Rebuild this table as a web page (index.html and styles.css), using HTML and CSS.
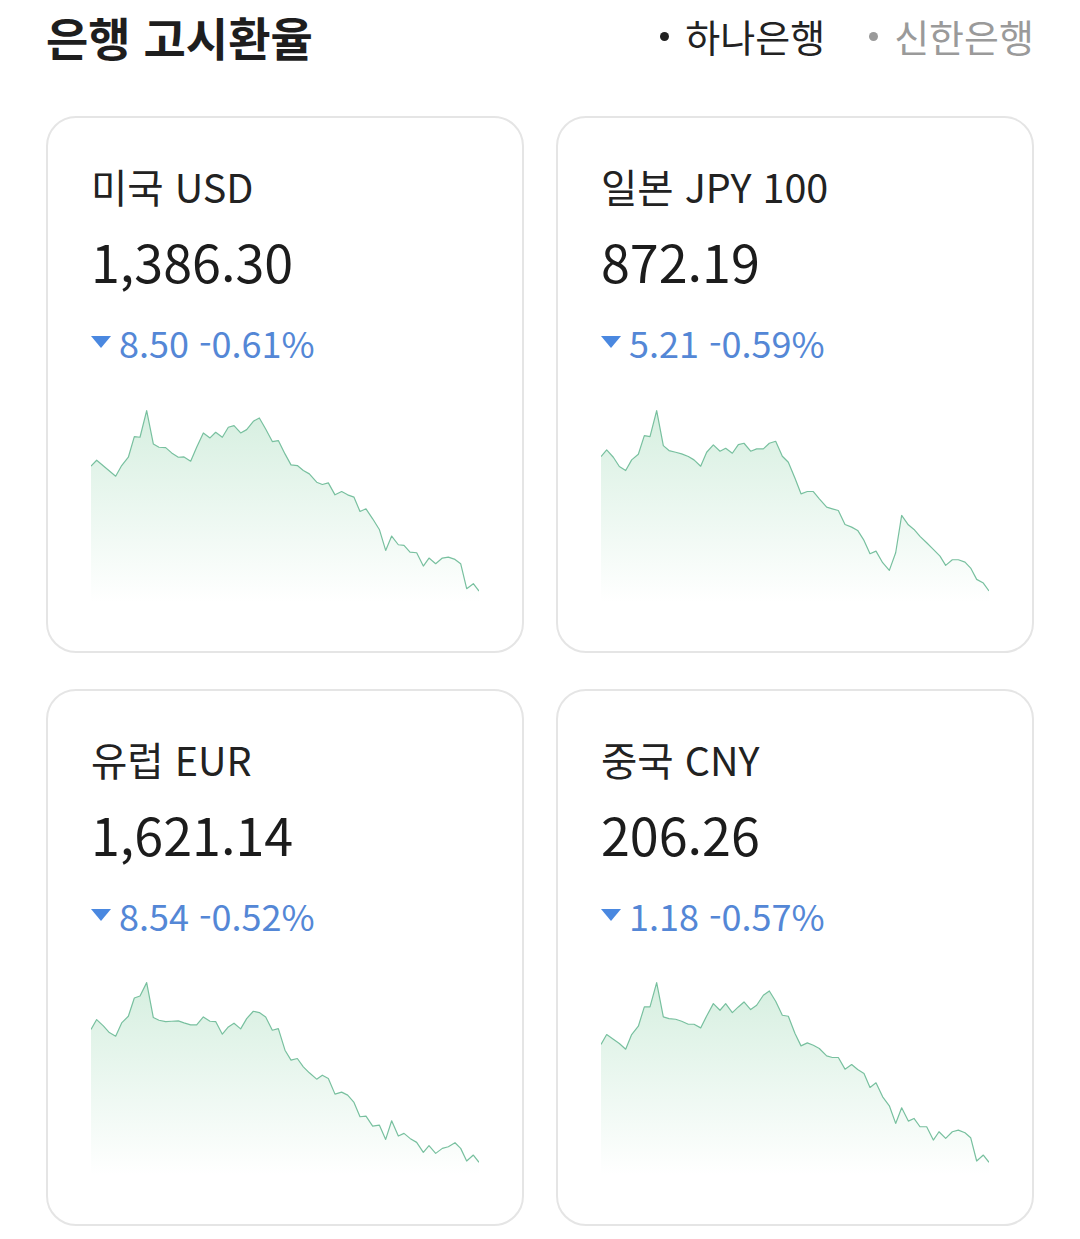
FILE: index.html
```html
<!DOCTYPE html>
<html lang="ko">
<head>
<meta charset="utf-8">
<title>은행 고시환율</title>
<link rel="stylesheet" href="styles.css">
</head>
<body>
<header class="header">
  <h1 class="title">은행 고시환율</h1>
  <nav class="tabs">
    <span class="tab tab-active"><i class="dot"></i>하나은행</span>
    <span class="tab"><i class="dot"></i>신한은행</span>
  </nav>
</header>
<main class="grid">
  <section class="card">
    <div class="label">미국 USD</div>
    <div class="value">1,386.30</div>
    <div class="change"><svg class="tri" viewBox="0 0 20 12"><polygon points="0,0 20,0 10,12"/></svg>8.50 -0.61%</div>
    <svg class="chart" viewBox="33 0 1164 640" preserveAspectRatio="none">
      <defs><linearGradient id="g1" x1="0" y1="0" x2="0" y2="1"><stop offset="0" stop-color="#d6efe0"/><stop offset="1" stop-color="#ffffff"/></linearGradient></defs>
      <path class="area" fill="url(#g1)" d="M33,640 L33,232 50,214 107,262 125,230 145,205 163,143 180,145 200,65 220,165 237,175 257,176 275,192 295,205 312,204 332,217 350,175 370,132 390,147 407,130 427,145 445,115 462,110 482,132 500,122 520,97 538,87 557,120 577,158 595,155 615,195 633,228 652,230 670,245 688,255 710,280 727,287 745,282 765,318 785,308 803,318 822,325 840,368 858,360 878,390 898,422 917,485 935,442 955,468 972,470 990,490 1010,492 1030,532 1047,508 1067,525 1087,508 1105,505 1125,512 1142,525 1160,600 1180,585 1197,607 L1197,640 Z"/>
      <polyline class="line" points="33,232 50,214 107,262 125,230 145,205 163,143 180,145 200,65 220,165 237,175 257,176 275,192 295,205 312,204 332,217 350,175 370,132 390,147 407,130 427,145 445,115 462,110 482,132 500,122 520,97 538,87 557,120 577,158 595,155 615,195 633,228 652,230 670,245 688,255 710,280 727,287 745,282 765,318 785,308 803,318 822,325 840,368 858,360 878,390 898,422 917,485 935,442 955,468 972,470 990,490 1010,492 1030,532 1047,508 1067,525 1087,508 1105,505 1125,512 1142,525 1160,600 1180,585 1197,607"/>
    </svg>
  </section>
  <section class="card">
    <div class="label">일본 JPY 100</div>
    <div class="value">872.19</div>
    <div class="change"><svg class="tri" viewBox="0 0 20 12"><polygon points="0,0 20,0 10,12"/></svg>5.21 -0.59%</div>
    <svg class="chart" viewBox="33 0 1164 640" preserveAspectRatio="none">
      <defs><linearGradient id="g2" x1="0" y1="0" x2="0" y2="1"><stop offset="0" stop-color="#d6efe0"/><stop offset="1" stop-color="#ffffff"/></linearGradient></defs>
      <path class="area" fill="url(#g2)" d="M33,640 L33,203 50,183 70,205 88,233 107,245 125,213 145,196 163,140 180,143 200,65 220,170 237,185 257,190 275,195 295,203 312,213 332,232 350,190 370,168 390,187 407,178 427,193 445,167 462,163 482,187 500,180 520,180 538,163 557,157 577,202 595,220 615,268 633,315 652,308 670,308 688,330 710,355 727,360 745,365 765,407 785,415 803,425 822,455 840,495 858,487 878,522 898,545 917,492 935,380 955,408 972,422 990,443 1010,462 1030,482 1050,502 1067,530 1087,513 1105,513 1125,520 1142,538 1160,572 1180,583 1197,607 L1197,640 Z"/>
      <polyline class="line" points="33,203 50,183 70,205 88,233 107,245 125,213 145,196 163,140 180,143 200,65 220,170 237,185 257,190 275,195 295,203 312,213 332,232 350,190 370,168 390,187 407,178 427,193 445,167 462,163 482,187 500,180 520,180 538,163 557,157 577,202 595,220 615,268 633,315 652,308 670,308 688,330 710,355 727,360 745,365 765,407 785,415 803,425 822,455 840,495 858,487 878,522 898,545 917,492 935,380 955,408 972,422 990,443 1010,462 1030,482 1050,502 1067,530 1087,513 1105,513 1125,520 1142,538 1160,572 1180,583 1197,607"/>
    </svg>
  </section>
  <section class="card">
    <div class="label">유럽 EUR</div>
    <div class="value">1,621.14</div>
    <div class="change"><svg class="tri" viewBox="0 0 20 12"><polygon points="0,0 20,0 10,12"/></svg>8.54 -0.52%</div>
    <svg class="chart" viewBox="33 0 1164 640" preserveAspectRatio="none">
      <defs><linearGradient id="g3" x1="0" y1="0" x2="0" y2="1"><stop offset="0" stop-color="#d6efe0"/><stop offset="1" stop-color="#ffffff"/></linearGradient></defs>
      <path class="area" fill="url(#g3)" d="M33,640 L33,203 50,173 70,192 88,212 107,223 125,183 145,163 163,108 180,102 200,62 220,167 237,175 257,179 275,178 295,177 312,183 332,189 350,189 370,165 390,178 407,179 427,217 445,195 462,184 482,201 500,170 520,148 538,152 557,165 577,205 595,200 615,265 633,295 652,290 670,315 688,333 710,352 727,340 745,350 765,397 785,391 803,400 822,422 840,465 858,463 878,493 898,490 917,533 935,477 955,523 972,515 990,530 1010,542 1030,572 1047,552 1067,575 1087,560 1105,555 1125,543 1142,560 1160,598 1180,580 1197,602 L1197,640 Z"/>
      <polyline class="line" points="33,203 50,173 70,192 88,212 107,223 125,183 145,163 163,108 180,102 200,62 220,167 237,175 257,179 275,178 295,177 312,183 332,189 350,189 370,165 390,178 407,179 427,217 445,195 462,184 482,201 500,170 520,148 538,152 557,165 577,205 595,200 615,265 633,295 652,290 670,315 688,333 710,352 727,340 745,350 765,397 785,391 803,400 822,422 840,465 858,463 878,493 898,490 917,533 935,477 955,523 972,515 990,530 1010,542 1030,572 1047,552 1067,575 1087,560 1105,555 1125,543 1142,560 1160,598 1180,580 1197,602"/>
    </svg>
  </section>
  <section class="card">
    <div class="label">중국 CNY</div>
    <div class="value">206.26</div>
    <div class="change"><svg class="tri" viewBox="0 0 20 12"><polygon points="0,0 20,0 10,12"/></svg>1.18 -0.57%</div>
    <svg class="chart" viewBox="33 0 1164 640" preserveAspectRatio="none">
      <defs><linearGradient id="g4" x1="0" y1="0" x2="0" y2="1"><stop offset="0" stop-color="#d6efe0"/><stop offset="1" stop-color="#ffffff"/></linearGradient></defs>
      <path class="area" fill="url(#g4)" d="M33,640 L33,248 50,218 70,232 88,245 107,262 125,218 145,193 163,135 180,135 200,62 220,165 237,170 257,172 275,178 295,187 312,187 332,198 350,162 370,125 390,145 407,125 427,152 445,135 462,120 482,143 500,130 520,100 538,87 557,118 577,160 595,163 615,215 633,252 652,243 670,250 688,260 710,282 727,287 745,287 765,322 785,308 803,323 822,335 840,377 858,363 878,405 898,432 917,485 935,438 955,478 972,470 990,495 1010,495 1030,535 1047,510 1067,530 1087,510 1105,505 1125,513 1142,528 1160,598 1180,580 1197,602 L1197,640 Z"/>
      <polyline class="line" points="33,248 50,218 70,232 88,245 107,262 125,218 145,193 163,135 180,135 200,62 220,165 237,170 257,172 275,178 295,187 312,187 332,198 350,162 370,125 390,145 407,125 427,152 445,135 462,120 482,143 500,130 520,100 538,87 557,118 577,160 595,163 615,215 633,252 652,243 670,250 688,260 710,282 727,287 745,287 765,322 785,308 803,323 822,335 840,377 858,363 878,405 898,432 917,485 935,438 955,478 972,470 990,495 1010,495 1030,535 1047,510 1067,530 1087,510 1105,505 1125,513 1142,528 1160,598 1180,580 1197,602"/>
    </svg>
  </section>
</main>
</body>
</html>
```

FILE: styles.css
```css
* { box-sizing: border-box; }
html, body {
  margin: 0;
  padding: 0;
  background: #ffffff;
}
body {
  font-family: "Noto Sans CJK KR", "Noto Sans", sans-serif;
  color: #222222;
}
.header {
  display: flex;
  align-items: center;
  justify-content: space-between;
  padding: 5px 46px 0 46px;
  height: 67px;
}
.title {
  margin: 0;
  font-size: 46px;
  font-weight: 700;
  line-height: 60px;
  color: #1e1e1e;
}
.tabs {
  display: flex;
  align-items: center;
  gap: 44px;
}
.tab {
  display: flex;
  align-items: center;
  gap: 16px;
  font-size: 38px;
  line-height: 60px;
  color: #9a9a9a;
}
.tab-active {
  color: #222222;
}
.dot {
  display: block;
  width: 9px;
  height: 9px;
  border-radius: 50%;
  background: currentColor;
}
.grid {
  display: grid;
  grid-template-columns: 1fr 1fr;
  column-gap: 32px;
  row-gap: 36px;
  padding: 49px 46px 0 46px;
}
.card {
  display: flex;
  flex-direction: column;
  border: 2px solid #e5e5e5;
  border-radius: 30px;
  padding: 43px 43px 46px 43px;
  height: 537px;
}
.label {
  font-size: 39.5px;
  line-height: 50px;
  color: #222222;
}
.value {
  margin-top: 15px;
  font-size: 52px;
  line-height: 70px;
  color: #1c1c1c;
}
.change {
  margin-top: 21px;
  display: flex;
  align-items: center;
  gap: 8px;
  font-size: 36px;
  line-height: 50px;
  color: #5487d6;
}
.tri {
  width: 20px;
  height: 12px;
  fill: #4a88e0;
}
.chart {
  margin-top: 22px;
  width: 388px;
  height: 213px;
  display: block;
}
.area {
  stroke: none;
}
.line {
  fill: none;
  stroke: #78c09f;
  stroke-width: 1.2;
  vector-effect: non-scaling-stroke;
  stroke-linejoin: round;
}
```
